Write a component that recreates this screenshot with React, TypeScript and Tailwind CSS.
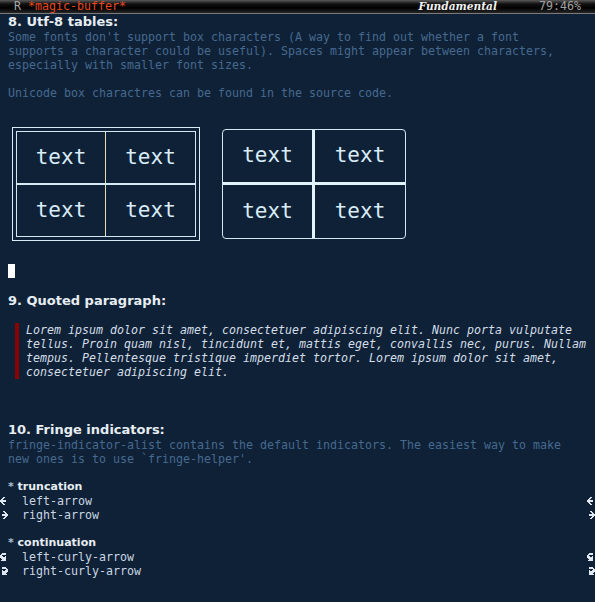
import React from "react";

const MONO = "font-['DejaVu_Sans_Mono','Liberation_Mono',monospace]";
const SANS = "font-['DejaVu_Sans','Liberation_Sans',sans-serif]";

const BITMAPS = {
  leftArrow: [0x18, 0x30, 0x60, 0xfc, 0xfc, 0x60, 0x30, 0x18],
  rightArrow: [0x18, 0x0c, 0x06, 0x3f, 0x3f, 0x06, 0x0c, 0x18],
  leftCurly: [0x3c, 0x7c, 0xc0, 0xe4, 0xfc, 0x7c, 0x3c, 0x7c],
  rightCurly: [0x3c, 0x3e, 0x03, 0x27, 0x3f, 0x3e, 0x3c, 0x3e],
};

type BitmapName = keyof typeof BITMAPS;

function FringeBitmap({ name }: { name?: BitmapName }) {
  if (!name) return <span className="w-[8px] shrink-0" />;
  const rows = BITMAPS[name];
  return (
    <span className="flex w-[8px] shrink-0 items-center text-[#dfe8f0]">
      <svg width="8" height="8" viewBox="0 0 8 8" shapeRendering="crispEdges">
        {rows.flatMap((row, y) =>
          Array.from({ length: 8 }, (_, x) =>
            row & (0x80 >> x) ? (
              <rect key={`${x}-${y}`} x={x} y={y} width="1" height="1" fill="currentColor" />
            ) : null,
          ),
        )}
      </svg>
    </span>
  );
}

function Line({
  children,
  className = "",
  fringe,
}: {
  children?: React.ReactNode;
  className?: string;
  fringe?: BitmapName;
}) {
  return (
    <div className="flex h-[14px]">
      <FringeBitmap name={fringe} />
      <div className={`flex-1 whitespace-pre leading-[14px] ${className}`}>{children}</div>
      <FringeBitmap name={fringe} />
    </div>
  );
}

function Heading({ children, tall = false }: { children: React.ReactNode; tall?: boolean }) {
  return (
    <div
      className={`${SANS} ${tall ? "h-[17px] pt-[1px]" : "h-[16px]"} whitespace-pre pl-[8px] text-[13px] font-bold leading-[16px] text-[#e6edf3]`}
    >
      {children}
    </div>
  );
}

function Comment({ children }: { children?: React.ReactNode }) {
  return <Line className={`${MONO} text-[11.63px] text-[#46698f]`}>{children}</Line>;
}

function Cell({ children }: { children: React.ReactNode }) {
  return (
    <div className={`${MONO} flex items-center justify-center text-[21px] text-[#d9ecf8]`}>
      {children}
    </div>
  );
}

function DoubleTable() {
  return (
    <div className="h-[114px] w-[188px] border border-[#d4ecf6] p-[3px]">
      <div className="grid h-full grid-cols-[88px_1px_89px] grid-rows-[51px_2px_51px] border border-[#cfe8f3]">
        <Cell>text</Cell>
        <div className="bg-[#e8dcb0]" />
        <Cell>text</Cell>
        <div className="col-span-3 bg-[#d4ecf6]" />
        <Cell>text</Cell>
        <div className="bg-[#e8dcb0]" />
        <Cell>text</Cell>
      </div>
    </div>
  );
}

function RoundTable() {
  return (
    <div className="mt-[2px] grid h-[110px] w-[184px] grid-cols-[89px_3px_90px] grid-rows-[52px_3px_53px] rounded-[4px] border border-[#cfe8f3]">
      <Cell>text</Cell>
      <div className="bg-[#e2f4fb]" />
      <Cell>text</Cell>
      <div className="col-span-3 bg-[#e2f4fb]" />
      <Cell>text</Cell>
      <div className="bg-[#e2f4fb]" />
      <Cell>text</Cell>
    </div>
  );
}

function ModeLine() {
  return (
    <div
      className={`${MONO} flex h-[14px] items-center border-b border-[#7a7a7a] bg-[linear-gradient(to_bottom,#5a5a5a_0%,#111_30%,#000_60%,#262626_100%)] pr-[14px] text-[11.63px] leading-[13px]`}
    >
      <span className="whitespace-pre text-[#a8a8a8]">{"  R "}</span>
      <span className="text-[#e8461e]">*magic-buffer*</span>
      <span className="ml-auto font-['DejaVu_Serif','Liberation_Serif',serif] text-[10.6px] font-bold italic text-[#f2f2f2]">
        Fundamental
      </span>
      <span className="ml-[42px] text-[#a0a0a0]">79:46%</span>
    </div>
  );
}

function ListHead({ children }: { children: React.ReactNode }) {
  return (
    <Line className={`${SANS} text-[11px] font-bold text-[#e6edf3]`}>
      <span className="text-[#a9bfd3]">* </span>
      {children}
    </Line>
  );
}

function ListItem({ children, fringe }: { children: React.ReactNode; fringe: BitmapName }) {
  return (
    <Line fringe={fringe} className={`${MONO} text-[11.63px] text-[#c9d6e2]`}>
      {"  "}
      {children}
    </Line>
  );
}

export default function App() {
  const quote = [
    "Lorem ipsum dolor sit amet, consectetuer adipiscing elit. Nunc porta vulputate",
    "tellus. Proin quam nisl, tincidunt et, mattis eget, convallis nec, purus. Nullam",
    "tempus. Pellentesque tristique imperdiet tortor. Lorem ipsum dolor sit amet,",
    "consectetuer adipiscing elit.",
  ];

  return (
    <div className="h-[602px] w-[595px] overflow-hidden bg-[#0f2136]">
      <ModeLine />

      <Heading>8. Utf-8 tables:</Heading>
      <Comment>Some fonts don't support box characters (A way to find out whether a font</Comment>
      <Comment>supports a character could be useful). Spaces might appear between characters,</Comment>
      <Comment>especially with smaller font sizes.</Comment>
      <Comment />
      <Comment>Unicode box charactres can be found in the source code.</Comment>

      <div className="flex h-[164px] items-start gap-[22px] pl-[12px] pt-[27px]">
        <DoubleTable />
        <RoundTable />
      </div>

      <Line>
        <span className="block h-[14px] w-[7px] bg-white" />
      </Line>
      <Line />

      <Heading tall>9. Quoted paragraph:</Heading>
      <Line />
      <div className="ml-[15px] flex">
        <div className="w-[4px] bg-[#8b0000]" />
        <div className={`${MONO} pl-[7px] text-[11.63px] italic leading-[14px] text-[#d3dee8]`}>
          {quote.map((text) => (
            <div key={text} className="h-[14px] whitespace-pre">
              {text}
            </div>
          ))}
        </div>
      </div>
      <Line />
      <Line />
      <Line />

      <Heading tall>10. Fringe indicators:</Heading>
      <Comment>fringe-indicator-alist contains the default indicators. The easiest way to make</Comment>
      <Comment>new ones is to use `fringe-helper'.</Comment>
      <Line />

      <ListHead>truncation</ListHead>
      <ListItem fringe="leftArrow">left-arrow</ListItem>
      <ListItem fringe="rightArrow">right-arrow</ListItem>
      <Line />
      <ListHead>continuation</ListHead>
      <ListItem fringe="leftCurly">left-curly-arrow</ListItem>
      <ListItem fringe="rightCurly">right-curly-arrow</ListItem>
    </div>
  );
}
